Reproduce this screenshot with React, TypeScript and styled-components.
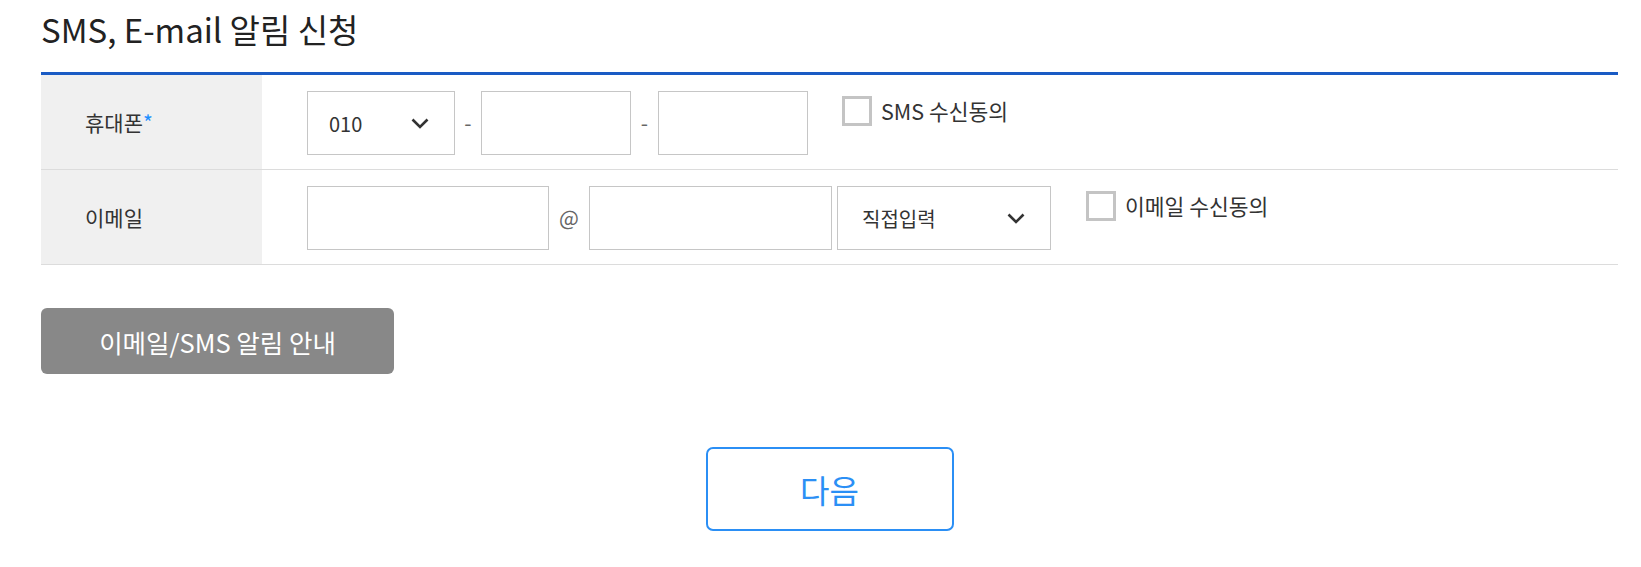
import React from 'react'
import styled, { createGlobalStyle } from 'styled-components';

const GlobalStyle = createGlobalStyle`
  body {
    margin: 0;
    background: #fff;
    font-family: "Noto Sans CJK KR", "Noto Sans", sans-serif;
    color: #333;
  }
`;

const Page = styled.div`
  width: 1641px;
  box-sizing: border-box;
  padding: 7px 23px 0 41px;
`;

const Title = styled.h2`
  margin: 0 0 21px;
  font-size: 33px;
  font-weight: 400;
  line-height: 44px;
  color: #222;
`;

const Table = styled.div`
  border-top: 3px solid #1a5bc4;
`;

const Row = styled.div`
  display: grid;
  grid-template-columns: 221px 1fr;
  height: 94px;
  border-bottom: 1px solid #dcdcdc;
`;

const Label = styled.div`
  display: flex;
  align-items: center;
  padding-left: 44px;
  background: #f0f0f0;
  font-size: 21px;
  color: #333;
`;

const Star = styled.span`
  color: #1e8fff;
`;

const Cell = styled.div`
  display: flex;
  align-items: flex-start;
  padding: 16px 0 0 45px;
`;

const Box = styled.div<{ $w: number }>`
  width: ${p => p.$w}px;
  height: 64px;
  box-sizing: border-box;
  border: 1px solid #c6c6c6;
  background: #fff;
`;

const Select = styled(Box)<{ $pl: number; $pr: number }>`
  display: flex;
  align-items: center;
  justify-content: space-between;
  padding: 0 ${p => p.$pr}px 0 ${p => p.$pl}px;
  font-size: 20px;
  color: #333;
`;

const Sep = styled.span<{ $w: number }>`
  width: ${p => p.$w}px;
  text-align: center;
  line-height: 62px;
  font-size: 21px;
  color: #666;
`;

const Agree = styled.label<{ $ml: number }>`
  display: flex;
  align-items: center;
  margin: 5px 0 0 ${p => p.$ml}px;
  font-size: 21.5px;
  line-height: 30px;
  color: #333;
  gap: 9px;
`;

const Check = styled.span`
  width: 30px;
  height: 30px;
  box-sizing: border-box;
  border: 3px solid #c4c4c4;
  background: #fff;
`;

const InfoButton = styled.button`
  display: block;
  margin-top: 43px;
  width: 353px;
  height: 66px;
  border: 0;
  border-radius: 6px;
  background: #888;
  color: #fff;
  font-family: inherit;
  font-size: 25.5px;
`;

const Footer = styled.div`
  display: flex;
  justify-content: center;
  margin-top: 73px;
`;

const NextButton = styled.button`
  width: 248px;
  height: 84px;
  border: 2px solid #2b8ff5;
  border-radius: 7px;
  background: #fff;
  color: #2b8ff5;
  font-family: inherit;
  font-size: 32px;
`;

const Chevron = () => (
  <svg width="18" height="11" viewBox="0 0 18 11">
    <polyline points="1.5,1.5 9,9 16.5,1.5" fill="none" stroke="#333" strokeWidth="2.6" />
  </svg>
)

const App = () => {
  return (
    <Page>
      <GlobalStyle />
      <Title>SMS, E-mail 알림 신청</Title>
      <Table>
        <Row>
          <Label>휴대폰<Star>*</Star></Label>
          <Cell>
            <Select $w={148} $pl={21} $pr={25}>010<Chevron /></Select>
            <Sep $w={26}>-</Sep>
            <Box $w={150} />
            <Sep $w={27}>-</Sep>
            <Box $w={150} />
            <Agree $ml={34}><Check />SMS 수신동의</Agree>
          </Cell>
        </Row>
        <Row>
          <Label>이메일</Label>
          <Cell>
            <Box $w={242} />
            <Sep $w={40}>@</Sep>
            <Box $w={243} />
            <Sep $w={5} />
            <Select $w={214} $pl={24} $pr={25}>직접입력<Chevron /></Select>
            <Agree $ml={35}><Check />이메일 수신동의</Agree>
          </Cell>
        </Row>
      </Table>
      <InfoButton>이메일/SMS 알림 안내</InfoButton>
      <Footer>
        <NextButton>다음</NextButton>
      </Footer>
    </Page>
  )
}

export default App
